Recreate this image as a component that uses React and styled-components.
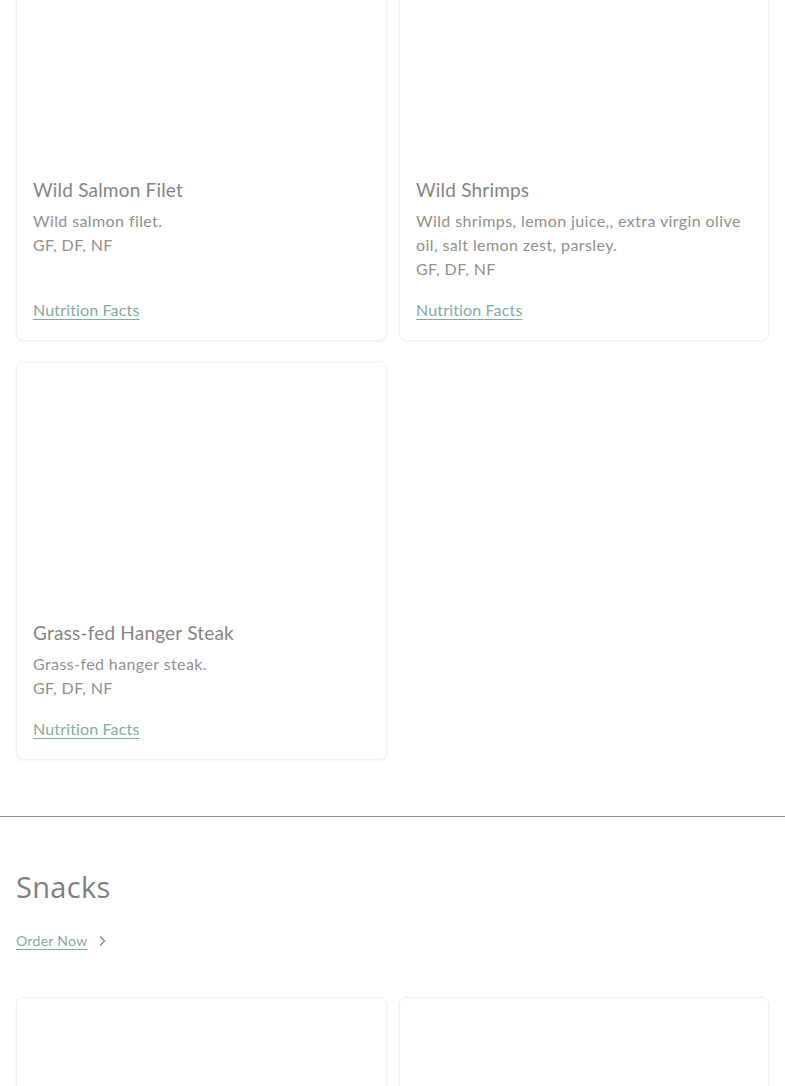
import React from "react";
import styled, { createGlobalStyle } from "styled-components";

const Global = createGlobalStyle`
  html, body { margin: 0; padding: 0; background: #fff; }
  body { font-family: "Lato", "Open Sans", sans-serif; overflow: hidden; }
`;

const Page = styled.div`
  width: 785px;
  margin-top: -82px;
`;

const Section = styled.section`
  padding: ${(p) => p.$pt || 0}px 16px ${(p) => p.$pb || 0}px;
  border-bottom: ${(p) => (p.$divider ? "1px solid #8a8a8a" : "none")};
`;

const Grid = styled.div`
  display: grid;
  grid-template-columns: 371px 370px;
  column-gap: 12px;
  row-gap: 20px;
`;

const Card = styled.article`
  display: flex;
  flex-direction: column;
  background: #fff;
  border: 1px solid #f1f1f1;
  border-radius: 8px;
  box-shadow: 0 1px 3px rgba(0, 0, 0, 0.05);
  overflow: hidden;
`;

const Photo = styled.div`
  height: 240px;
  background: #fff;
`;

const Body = styled.div`
  flex: 1;
  display: flex;
  flex-direction: column;
  padding: 17px 16px 18px;
`;

const Title = styled.h3`
  margin: 0 0 5px;
  font-size: 19px;
  line-height: 28px;
  font-weight: 400;
  color: #858585;
  letter-spacing: 0.2px;
`;

const Desc = styled.p`
  margin: 0;
  font-size: 16px;
  line-height: 24px;
  font-weight: 400;
  color: #919191;
  letter-spacing: 0.4px;
`;

const Link = styled.a`
  margin-top: auto;
  padding-top: 17px;
  font-size: 16px;
  line-height: 24px;
  color: #84aba4;
  letter-spacing: 0.15px;
  text-decoration: underline;
  text-underline-offset: 3px;
  text-decoration-thickness: 1px;
  align-self: flex-start;
`;

const SectionTitle = styled.h2`
  margin: 0 0 26px;
  font-family: "Open Sans", "Lato", sans-serif;
  font-size: 29px;
  line-height: 36px;
  font-weight: 400;
  color: #7f7f7f;
  letter-spacing: 0.3px;
`;

const OrderRow = styled.div`
  display: flex;
  align-items: center;
  gap: 9px;
  margin-bottom: 46px;
`;

const OrderLink = styled.a`
  font-size: 14px;
  line-height: 20px;
  color: #84aba4;
  letter-spacing: 0.3px;
  text-decoration: underline;
  text-underline-offset: 3px;
`;

const Chevron = () => (
  <svg width="10" height="12" viewBox="0 0 10 12" fill="none">
    <path d="M3 1.5 L7.5 6 L3 10.5" stroke="#8a8a8a" strokeWidth="1.4" />
  </svg>
);

const items = [
  { title: "Wild Salmon Filet", lines: ["Wild salmon filet.", "GF, DF, NF"] },
  {
    title: "Wild Shrimps",
    lines: ["Wild shrimps, lemon juice,, extra virgin olive oil, salt lemon zest, parsley.", "GF, DF, NF"],
  },
  { title: "Grass-fed Hanger Steak", lines: ["Grass-fed hanger steak.", "GF, DF, NF"] },
];

const MealCard = ({ item }) => (
  <Card>
    <Photo />
    <Body>
      <Title>{item.title}</Title>
      {item.lines.map((l, i) => (
        <Desc key={i}>{l}</Desc>
      ))}
      <Link>Nutrition Facts</Link>
    </Body>
  </Card>
);

export default function App() {
  return (
    <>
      <Global />
      <Page>
        <Section $pb={56} $divider>
          <Grid>
            {items.map((it) => (
              <MealCard key={it.title} item={it} />
            ))}
          </Grid>
        </Section>
        <Section $pt={52}>
          <SectionTitle>Snacks</SectionTitle>
          <OrderRow>
            <OrderLink>Order Now</OrderLink>
            <Chevron />
          </OrderRow>
          <Grid>
            <Card>
              <Photo />
            </Card>
            <Card>
              <Photo />
            </Card>
          </Grid>
        </Section>
      </Page>
    </>
  );
}
